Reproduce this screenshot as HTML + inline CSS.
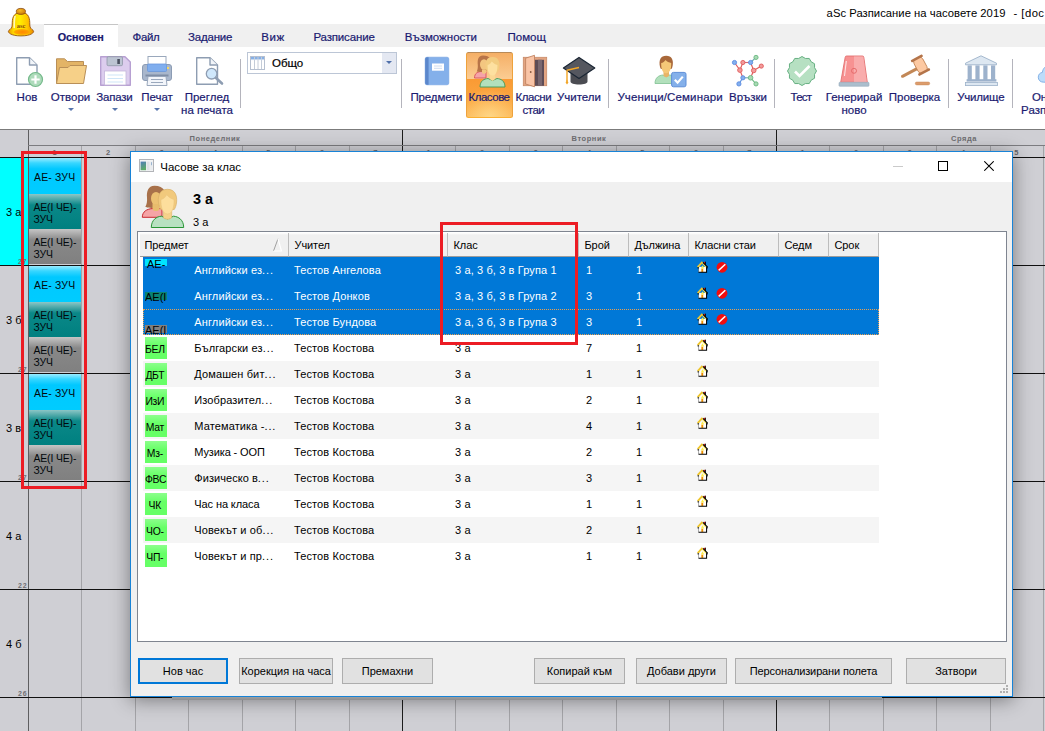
<!DOCTYPE html>
<html><head><meta charset="utf-8"><title>aSc</title><style>
*{box-sizing:border-box;margin:0;padding:0}
html,body{width:1045px;height:731px;overflow:hidden;background:#fff}
body{font-family:"Liberation Sans",sans-serif;position:relative;color:#000}
.a{position:absolute}
.t{position:absolute;white-space:pre;line-height:1}
.rl{-webkit-text-stroke:0.2px #1a1a70;position:absolute;white-space:pre;font-size:11.5px;line-height:13px;color:#1a1a70;text-align:center;transform:translateX(-50%)}
.tab{-webkit-text-stroke:0.2px #1a1a70;position:absolute;white-space:pre;font-size:11.5px;line-height:14px;color:#1a1a70;top:30px}
.sep{position:absolute;width:1px;background:#b4b4bc;top:59px;height:49px}
.vl{position:absolute;width:1px;background:#a4a4a8;top:145px;height:586px}
.vd{position:absolute;width:1px;background:#1c1c1c;top:130px;height:601px}
.hl{position:absolute;height:1px;background:#111;left:0;width:1045px}
.cl{position:absolute;font-size:11px;line-height:12px;left:6px;white-space:pre}
.cn{position:absolute;font-size:7px;line-height:7px;left:18px;color:#707074;font-weight:bold;white-space:pre;letter-spacing:0.8px}
.card{position:absolute;left:29px;width:52px;font-size:10.4px;line-height:11.5px;color:#02080c;letter-spacing:-0.12px;white-space:pre;overflow:hidden}
.lv{position:absolute;font-size:11px;line-height:13px;white-space:pre;letter-spacing:0.12px}
.hd{position:absolute;top:233px;height:24px;border-right:1px solid #bdbdbd;border-bottom:1px solid #9c9c9c;background:linear-gradient(#fff 0,#f0f0f0 2px);font-size:11px;line-height:25px;padding-left:5.5px;white-space:pre;overflow:hidden;letter-spacing:-0.1px}
.btn{position:absolute;top:658px;height:26px;border:1px solid #adadad;background:#e1e1e1;font-size:11px;line-height:24px;text-align:center;white-space:pre}
.tag{position:absolute;left:145px;width:22px;height:22px;background:linear-gradient(#8cff8c,#66ff66 40%);font-size:10.4px;letter-spacing:-0.3px;line-height:25px;text-align:center;padding-right:2.4px;white-space:pre;overflow:hidden}
</style></head><body>
<div class="t" style="left:826.6px;top:7px;font-size:11.25px;line-height:13px;color:#000;letter-spacing:0.03px">aSc Разписание на часовете 2019</div>
<div class="t" style="left:1013.6px;top:7px;font-size:11.25px;line-height:13px;color:#000;letter-spacing:0.45px">- [doc</div>
<div class="a" style="left:0;top:24px;width:1045px;height:23px;background:#f0f0f0"></div>
<div class="a" style="left:44px;top:24px;width:74px;height:24px;background:#fff;border-top:1px solid #c6c6c6"></div>
<div class="tab" style="left:57.8px;letter-spacing:-0.1px;font-weight:bold;font-size:10.8px;">Основен</div>
<div class="tab" style="left:132.6px;letter-spacing:-0.4px;">Файл</div>
<div class="tab" style="left:188px;letter-spacing:-0.2px;">Задание</div>
<div class="tab" style="left:261.3px;letter-spacing:0.6px;">Виж</div>
<div class="tab" style="left:313.4px;letter-spacing:-0.15px;">Разписание</div>
<div class="tab" style="left:404.8px;letter-spacing:0px;">Възможности</div>
<div class="tab" style="left:507.5px;letter-spacing:0px;">Помощ</div>
<svg class="a" style="left:7px;top:6px" width="29" height="32" viewBox="0 0 29 32">
<defs>
<linearGradient id="bg1" x1="0" y1="0" x2="1" y2="0"><stop offset="0" stop-color="#e89800"/><stop offset="0.2" stop-color="#ffd800"/><stop offset="0.45" stop-color="#ffee00"/><stop offset="0.75" stop-color="#ffc400"/><stop offset="1" stop-color="#e88a00"/></linearGradient>
<radialGradient id="bg2" cx="0.55" cy="0.5" r="0.6"><stop offset="0" stop-color="#ff8800"/><stop offset="0.7" stop-color="#ffa400"/><stop offset="1" stop-color="#ffc800"/></radialGradient>
<radialGradient id="bg3" cx="0.4" cy="0.35" r="0.7"><stop offset="0" stop-color="#f8b820"/><stop offset="1" stop-color="#c87808"/></radialGradient>
</defs>
<path d="M14 6.6C22.5 6.6 22.8 13 22.8 19C22.8 22 24.5 23 26.3 24.6C27.6 26 25 29.9 14 29.9C3 29.9 0.4 26 1.7 24.6C3.5 23 5.2 22 5.2 19C5.2 13 5.5 6.6 14 6.6Z" fill="url(#bg1)" stroke="#9a5410" stroke-width="0.9"/>
<ellipse cx="14.6" cy="26" rx="8.2" ry="2.9" fill="url(#bg2)"/>
<path d="M8 10.5C7.2 13 7.2 18 7.2 21.5" stroke="#fffbe0" stroke-width="1.6" fill="none" opacity="0.85" stroke-linecap="round"/>
<ellipse cx="13.9" cy="5.4" rx="4.6" ry="3" fill="url(#bg3)" stroke="#8a4a10" stroke-width="0.8"/>
<text x="14" y="22" font-family="Liberation Serif" font-size="6.5" font-weight="bold" fill="#8a4a12" text-anchor="middle">asc</text>
</svg>
<div class="a" style="left:0;top:129px;width:1045px;height:2px;background:linear-gradient(#6c6c6c,#a8a8a8)"></div>
<div class="sep" style="left:240px"></div>
<div class="sep" style="left:401px"></div>
<div class="sep" style="left:608px"></div>
<div class="sep" style="left:774px"></div>
<div class="sep" style="left:948px"></div>
<div class="sep" style="left:1012px"></div>
<div class="a" style="left:466px;top:52px;width:47px;height:66px;border:1px solid #eea23c;border-top-color:#b88a58;border-bottom-color:#fbb030;border-radius:2.5px;background:radial-gradient(ellipse 70% 45% at 50% 100%,rgba(255,225,150,0.75),rgba(255,225,150,0) 100%),linear-gradient(#f5af66 0%,#fbcc92 40%,#fa9a34 40.5%,#fba640 75%,#fcb654 100%)"></div>
<div class="rl" style="left:27px;top:91px">Нов</div>
<div class="rl" style="left:70.5px;top:91px">Отвори</div>
<div class="a" style="left:67.5px;top:107.5px;width:0;height:0;border-left:3px solid transparent;border-right:3px solid transparent;border-top:3.5px solid #5674ac"></div>
<div class="rl" style="left:114.5px;top:91px"><span style="letter-spacing:-0.25px;margin-right:0.25px">Запази</span></div>
<div class="a" style="left:111.5px;top:107.5px;width:0;height:0;border-left:3px solid transparent;border-right:3px solid transparent;border-top:3.5px solid #5674ac"></div>
<div class="rl" style="left:157px;top:91px">Печат</div>
<div class="a" style="left:154px;top:107.5px;width:0;height:0;border-left:3px solid transparent;border-right:3px solid transparent;border-top:3.5px solid #5674ac"></div>
<div class="rl" style="left:207px;top:91px">Преглед
на печата</div>
<div class="rl" style="left:436.5px;top:91px"><span style="letter-spacing:-0.15px;margin-right:0.15px">Предмети</span></div>
<div class="rl" style="left:489.3px;top:91px"><span style="letter-spacing:-0.5px;margin-right:0.5px">Класове</span></div>
<div class="rl" style="left:533.6px;top:91px"><span style="letter-spacing:-0.45px;margin-right:0.45px">Класни</span>
<span style="letter-spacing:-0.45px;margin-right:0.45px">стаи</span></div>
<div class="rl" style="left:579px;top:91px">Учители</div>
<div class="rl" style="left:670px;top:91px"><span style="letter-spacing:0.13px;margin-right:-0.13px">Ученици/Семинари</span></div>
<div class="rl" style="left:748px;top:91px">Връзки</div>
<div class="rl" style="left:801.3px;top:91px"><span style="letter-spacing:-0.8px;margin-right:0.8px">Тест</span></div>
<div class="rl" style="left:854px;top:91px">Генерирай
ново</div>
<div class="rl" style="left:914.5px;top:91px">Проверка</div>
<div class="rl" style="left:980.9px;top:91px"><span style="letter-spacing:-0.2px;margin-right:0.2px">Училище</span></div>
<div class="rl" style="left:1052.5px;top:91px">Онлайн
Разписание</div>
<div class="a" style="left:247px;top:52px;width:150px;height:22px;border:1px solid #bcc6d6;background:#fff"></div>
<div class="a" style="left:382px;top:53px;width:14px;height:20px;background:#e4e8f2"></div>
<div class="a" style="left:386px;top:61px;width:0;height:0;border-left:3px solid transparent;border-right:3px solid transparent;border-top:3.5px solid #5070aa"></div>
<div class="t" style="left:272px;top:57px;font-size:11.5px;line-height:13px;color:#000;-webkit-text-stroke:0.2px #000">Общо</div>
<svg class="a" style="left:250px;top:56px" width="15" height="14" viewBox="0 0 15 14"><rect x="0.5" y="0.5" width="14" height="13" fill="#fff" stroke="#b6c0d0"/><rect x="1" y="1" width="13" height="2.4" fill="#86b0e6"/><path d="M4.5 1V13M8 1V13M11.5 1V13" stroke="#c4ccd8" stroke-width="1" fill="none"/><path d="M1 3.6H14" stroke="#c4d4ea" stroke-width="0.8"/></svg>
<!-- New -->
<svg class="a" style="left:14px;top:55px" width="32" height="34" viewBox="0 0 32 34">
<path d="M2.7 2.7H15.5L23 10V29.3H2.7Z" fill="#fff" stroke="#8e9db2" stroke-width="1.4" stroke-linejoin="round"/>
<path d="M15.5 2.7V10H23" fill="#f2f5f9" stroke="#8e9db2" stroke-width="1.4" stroke-linejoin="round"/>
<circle cx="21.5" cy="24.5" r="7" fill="#aedbbb" stroke="#74b98a" stroke-width="1.2"/>
<path d="M21.5 20.3V28.7M17.3 24.5H25.7" stroke="#fff" stroke-width="2.2"/>
</svg>
<!-- Open -->
<svg class="a" style="left:54px;top:55px" width="36" height="34" viewBox="0 0 36 34">
<path d="M2.5 28.5V3.8H10.5L13.5 6.5H29.5V10.5" fill="#e3b466" stroke="#b98f57" stroke-width="1" stroke-linejoin="round"/>
<path d="M2.5 28.5L5.5 12.5L14 12.5L16 10.5H32.5L29.5 28.5Z" fill="#f6d088" stroke="#b98f57" stroke-width="1" stroke-linejoin="round"/>
</svg>
<!-- Save -->
<svg class="a" style="left:98px;top:54px" width="36" height="34" viewBox="0 0 36 34">
<path d="M2.7 2.7H27L32.3 8V31.3H2.7Z" fill="#dccdee" stroke="#b7a0d2" stroke-width="1.4" stroke-linejoin="round"/>
<rect x="9" y="2.7" width="15.5" height="9" rx="1.3" fill="#bcc4d2" stroke="#8f97a8" stroke-width="0.8"/>
<rect x="19.3" y="5" width="2.6" height="5" fill="#4a5060"/>
<rect x="6.5" y="17" width="21.5" height="14" fill="#fff" stroke="#c4b6da" stroke-width="0.8"/>
<path d="M9.5 21H25M9.5 24.5H25M9.5 28H25" stroke="#cfe6f8" stroke-width="1.2"/>
</svg>
<!-- Print -->
<svg class="a" style="left:140px;top:54px" width="34" height="34" viewBox="0 0 34 34">
<rect x="8" y="2.5" width="18" height="10" fill="#fff" stroke="#9aa8bc" stroke-width="1"/>
<rect x="2.5" y="10.5" width="29" height="16" rx="2.5" fill="#a9b7cc" stroke="#8c9cb4" stroke-width="1"/>
<rect x="7.5" y="10" width="19" height="7.5" rx="1" fill="#80aeee" stroke="#6a98dc" stroke-width="0.8"/>
<rect x="27" y="13" width="2" height="2" fill="#f4d868"/>
<path d="M5.5 21.5H28.5" stroke="#7f8ea6" stroke-width="2"/>
<path d="M8 22.5H26L27 31.5H7Z" fill="#f2f5fa" stroke="#9aa8bc" stroke-width="1"/>
<path d="M11 25.5H23M11 28.5H23" stroke="#9aa8bc" stroke-width="1.1"/>
</svg>
<!-- Preview -->
<svg class="a" style="left:194px;top:55px" width="32" height="34" viewBox="0 0 32 34">
<path d="M2.7 2.7H16L23.5 10V29.3H2.7Z" fill="#fff" stroke="#8e9db2" stroke-width="1.4" stroke-linejoin="round"/>
<path d="M16 2.7V10H23.5" fill="#f2f5f9" stroke="#8e9db2" stroke-width="1.4" stroke-linejoin="round"/>
<path d="M21.5 22.5L28 28.5" stroke="#8e9db2" stroke-width="2.6" stroke-linecap="round"/>
<circle cx="17.6" cy="18.7" r="5.3" fill="#cfe7fb" stroke="#8e9db2" stroke-width="1.3"/>
</svg>
<!-- Subjects (book) -->
<svg class="a" style="left:423px;top:55px" width="28" height="32" viewBox="0 0 28 32">
<rect x="2.2" y="2.2" width="23.6" height="27.6" rx="1.8" fill="#84b0ea" stroke="#6f9ee0" stroke-width="0.6"/>
<path d="M2.2 4A1.8 1.8 0 0 1 4 2.2H5.6V29.8H4A1.8 1.8 0 0 1 2.2 28Z" fill="#5b87cb"/>
<rect x="9" y="8.5" width="12" height="7.2" fill="#fff"/>
<path d="M11 11H19M11 13.3H19" stroke="#c8d8ee" stroke-width="0.9"/>
</svg>
<!-- Classes (two people) -->
<svg class="a" style="left:472px;top:53px" width="36" height="36" viewBox="0 0 36 36">
<path d="M2.5 25C2.5 20 6 18.5 10 18.5H14V25Z" fill="#f5a3a8" stroke="#d9505c" stroke-width="0.9"/>
<path d="M11 2.5C5.5 2.5 5.5 8 5.8 12C6 15 5.5 17 4.8 18.5C7 19.3 12 19 15 17.5L19 6C17 3.5 14.5 2.5 11 2.5Z" fill="#b87448"/>
<ellipse cx="12" cy="11.5" rx="4" ry="5.2" fill="#f3c680"/>
<path d="M10 16.5H14V20L12 21L10 20Z" fill="#f3c680"/>
<path d="M8 34C8 28 12 25.8 16 25.5L20.5 27.5L25 25.5C29 25.8 33 28 33 34Z" fill="#b2e0bc" stroke="#3f9a58" stroke-width="0.9"/>
<path d="M17.8 21H23.2V26L20.5 28L17.8 26Z" fill="#fbd894"/>
<path d="M20.5 4C14.5 4 13 9 13.6 14C13.9 16.5 14.8 18.5 15.5 19.5L25.5 19.5C26.2 18.5 27.1 16.5 27.4 14C28 9 26.5 4 20.5 4Z" fill="#f3cc80"/>
<path d="M15.6 12C17.5 11.5 19 10 19.8 8.5C21 10 23.5 11.5 25.4 12C25.6 17 24.5 22.5 20.5 22.5C16.5 22.5 15.4 17 15.6 12Z" fill="#fde0a0"/>
</svg>
<!-- Classrooms (door) -->
<svg class="a" style="left:521px;top:53px" width="28" height="36" viewBox="0 0 28 36">
<rect x="2.3" y="4.3" width="23.4" height="28.4" fill="#e3a582" stroke="#c98a68" stroke-width="0.8"/>
<rect x="10" y="6.8" width="13" height="26" fill="#5e4c56"/>
<rect x="17" y="6.8" width="4" height="26" fill="#7a676f"/>
<path d="M4.6 5.2L13.5 2.3V33.8L4.6 31Z" fill="#f9c4a6" stroke="#c28463" stroke-width="0.9" stroke-linejoin="round"/>
<circle cx="9.7" cy="19" r="0.9" fill="#8a5a40"/>
</svg>
<!-- Teachers (cap) -->
<svg class="a" style="left:561px;top:54px" width="36" height="34" viewBox="0 0 36 34">
<path d="M9.5 18V27.5C9.5 29.5 13 30.5 18 30.5C23 30.5 26.5 29.5 26.5 27.5V18Z" fill="#4b4c52"/>
<path d="M18 3.4L33.8 14L18 24.4L2.4 14Z" fill="#55575f" stroke="#1b2634" stroke-width="1.2" stroke-linejoin="round"/>
<path d="M18 13.5L6 16.2V27" stroke="#f2a526" stroke-width="1.4" fill="none" stroke-linejoin="round"/>
<path d="M6 25.5L4.6 28.5L6 30.5L7.4 28.5Z" fill="#f2a526"/>
</svg>
<!-- Students -->
<svg class="a" style="left:653px;top:54px" width="36" height="36" viewBox="0 0 36 36">
<path d="M2 29.5C2 23.5 6 21.3 10 21L13.2 22.5L16.4 21C20.4 21.3 24 23.5 24 29.5Z" fill="#b2e0bc" stroke="#7fc092" stroke-width="0.8"/>
<path d="M10.5 17H16V22L13.2 23.6L10.5 22Z" fill="#e8b468"/>
<path d="M13.2 1.8C7.5 1.8 6.2 6 6.6 10.5C6.8 12.5 7.3 14 8 15L18.4 15C19.1 14 19.6 12.5 19.8 10.5C20.2 6 18.9 1.8 13.2 1.8Z" fill="#a9683a"/>
<path d="M8.2 9C10 8.7 11.6 7.6 12.5 6C13.6 7.4 16.2 8.7 18.2 9C18.4 14 17.3 19.2 13.2 19.2C9.1 19.2 8 14 8.2 9Z" fill="#f5c878"/>
<rect x="18.6" y="18.4" width="14.4" height="14.4" rx="1.8" fill="#84b0ea" stroke="#5f8fd8" stroke-width="1"/>
<path d="M21.8 25.8L24.6 28.6L29.8 22.6" stroke="#fff" stroke-width="2.2" fill="none"/>
</svg>
<!-- Relations (molecule) -->
<svg class="a" style="left:730px;top:53px" width="36" height="36" viewBox="0 0 36 36">
<g stroke-width="1.1" fill="none">
<path d="M4.5 9.5L9.9 17.1L12.9 9.5" stroke="#e05a5a"/>
<path d="M12.9 9.5H20.6" stroke="#d06a7a"/>
<path d="M20.6 9.5L26 4.4" stroke="#6aa8b0"/>
<path d="M20.6 9.5L23.7 17.5" stroke="#e05a5a"/>
<path d="M31.3 13.1L23.7 17.5" stroke="#e05a5a"/>
<path d="M23.7 17.5L20.6 24.8" stroke="#e05a5a"/>
<path d="M9.9 17.1L12.9 24.8" stroke="#e05a5a"/>
<path d="M12.9 24.8H20.6" stroke="#6aa8b0"/>
<path d="M12.9 24.8L8.9 30.9" stroke="#5a90e0"/>
<path d="M20.6 24.8L26 30.9" stroke="#6ab880"/>
</g>
<g stroke-width="0.9">
<circle cx="4.5" cy="9.5" r="2.1" fill="#84b0ee" stroke="#5a8ae0"/>
<circle cx="12.9" cy="9.5" r="2.1" fill="#f29a9a" stroke="#e05a5a"/>
<circle cx="20.6" cy="9.5" r="2.1" fill="#84b0ee" stroke="#5a8ae0"/>
<circle cx="26" cy="4.4" r="2.1" fill="#a8dab4" stroke="#6ab880"/>
<circle cx="31.3" cy="13.1" r="2.1" fill="#f29a9a" stroke="#e05a5a"/>
<circle cx="9.9" cy="17.1" r="2.3" fill="#f29a9a" stroke="#e05a5a"/>
<circle cx="23.7" cy="17.5" r="2.3" fill="#f29a9a" stroke="#e05a5a"/>
<circle cx="12.9" cy="24.8" r="2.1" fill="#84b0ee" stroke="#5a8ae0"/>
<circle cx="20.6" cy="24.8" r="2.3" fill="#a8dab4" stroke="#6ab880"/>
<circle cx="8.9" cy="30.9" r="2.1" fill="#84b0ee" stroke="#5a8ae0"/>
<circle cx="26" cy="30.9" r="2.1" fill="#a8dab4" stroke="#6ab880"/>
</g>
</svg>
<!-- Test badge -->
<svg class="a" style="left:785px;top:54px" width="34" height="34" viewBox="-17 -17 34 34">
<polygon points="0.00,-14.50 3.36,-12.56 7.25,-12.56 9.19,-9.19 12.56,-7.25 12.56,-3.36 14.50,0.00 12.56,3.36 12.56,7.25 9.19,9.19 7.25,12.56 3.36,12.56 0.00,14.50 -3.36,12.56 -7.25,12.56 -9.19,9.19 -12.56,7.25 -12.56,3.36 -14.50,0.00 -12.56,-3.36 -12.56,-7.25 -9.19,-9.19 -7.25,-12.56 -3.36,-12.56" fill="#b6e0c2" stroke="#66b082" stroke-width="1" stroke-linejoin="round"/>
<path d="M-7 0.5L-2.5 5L7.5 -5" stroke="#fff" stroke-width="2.6" fill="none"/>
</svg>
<!-- Generate (siren) -->
<svg class="a" style="left:837px;top:53px" width="34" height="36" viewBox="0 0 34 36">
<path d="M9.5 3H25.5Q26.6 3 26.8 4.2L30.3 29.3H3.7L8.2 4.2Q8.4 3 9.5 3Z" fill="#f79292" stroke="#e27070" stroke-width="0.9"/>
<path d="M17 3.4H25.3Q26.2 3.4 26.4 4.4L29.8 28.9H17Z" fill="#f9adad"/>
<path d="M9.3 8L7.5 23" stroke="#fde4e4" stroke-width="1.1"/>
<circle cx="17" cy="17.8" r="2.5" fill="none" stroke="#e26868" stroke-width="0.9"/>
<rect x="2" y="29.3" width="30" height="4" rx="0.8" fill="#abbecd" stroke="#98acbd" stroke-width="0.6"/>
</svg>
<!-- Check (gavel) -->
<svg class="a" style="left:897px;top:53px" width="38" height="36" viewBox="0 0 38 36">
<path d="M5.5 23.3L21 15.2" stroke="#c28756" stroke-width="3" stroke-linecap="round"/>
<g transform="rotate(-28 23.5 12.2)">
<rect x="18.5" y="4.5" width="10" height="15.4" rx="3.4" fill="#fdc9a2" stroke="#c08050" stroke-width="0.8"/>
<rect x="17" y="3.2" width="13" height="2.6" rx="0.8" fill="#b4744a"/>
<rect x="17" y="18.6" width="13" height="2.6" rx="0.8" fill="#b4744a"/>
</g>
<rect x="18.3" y="29" width="14.4" height="2.9" rx="1.4" fill="#dc9c6c" stroke="#c88858" stroke-width="0.5"/>
</svg>
<!-- School -->
<svg class="a" style="left:963px;top:53px" width="36" height="36" viewBox="0 0 36 36">
<path d="M18 2.8L33.5 10.2V11.8H2.5V10.2Z" fill="#dde7f1" stroke="#9db2ca" stroke-width="0.9" stroke-linejoin="round"/>
<g fill="#9db2cc">
<rect x="4.6" y="12.4" width="4.2" height="15.6"/><rect x="12.4" y="12.4" width="4.2" height="15.6"/><rect x="20.3" y="12.4" width="4.2" height="15.6"/><rect x="28" y="12.4" width="4.2" height="15.6"/>
<rect x="3.6" y="26.2" width="29.8" height="2.4"/>
</g>
<rect x="2.5" y="29.4" width="32" height="3.2" fill="#dde7f1" stroke="#9db2ca" stroke-width="0.8"/>
</svg>
<!-- Cloud -->
<svg class="a" style="left:1035.5px;top:63.5px" width="30" height="20" viewBox="0 0 30 22">
<path d="M7 20C3 20 1 17.5 1 14.5C1 11.5 3 9.5 5.5 9.3C6 4.5 9.5 1.5 14 1.5C19 1.5 22 5 22.5 9C26 9 28.5 11.5 28.5 14.5C28.5 17.5 26.5 20 23 20Z" fill="#bcdcfa" stroke="#7cacE4" stroke-width="1"/>
</svg>

<div class="a" style="left:0;top:130px;width:1045px;height:601px;background:#cfcfd4"></div>
<div class="a" style="left:0;top:158px;width:28px;height:107px;background:#00ffff"></div>
<div class="vl" style="left:81.4px"></div>
<div class="vl" style="left:134.9px"></div>
<div class="vl" style="left:188.3px"></div>
<div class="vl" style="left:241.7px"></div>
<div class="vl" style="left:295.1px"></div>
<div class="vl" style="left:348.6px"></div>
<div class="vl" style="left:455.4px"></div>
<div class="vl" style="left:508.9px"></div>
<div class="vl" style="left:562.3px"></div>
<div class="vl" style="left:615.7px"></div>
<div class="vl" style="left:669.1px"></div>
<div class="vl" style="left:722.6px"></div>
<div class="vl" style="left:829.4px"></div>
<div class="vl" style="left:882.9px"></div>
<div class="vl" style="left:936.3px"></div>
<div class="vl" style="left:989.7px"></div>
<div class="vl" style="left:1043.1px"></div>
<div class="vd" style="left:28px;background:#5e5e60"></div>
<div class="vd" style="left:402px;"></div>
<div class="vd" style="left:776px;"></div>
<div class="a" style="left:28px;top:145px;width:1017px;height:1px;background:#7c7c80"></div>
<div class="hl" style="top:157px"></div>
<div class="hl" style="top:265px"></div>
<div class="hl" style="top:373px"></div>
<div class="hl" style="top:481px"></div>
<div class="hl" style="top:589px"></div>
<div class="hl" style="top:697px"></div>
<div class="t" style="left:215px;top:135px;font-size:7.5px;font-weight:bold;color:#6e6e72;transform:translateX(-50%);line-height:8px;letter-spacing:0.55px">Понеделник</div>
<div class="t" style="left:589px;top:135px;font-size:7.5px;font-weight:bold;color:#6e6e72;transform:translateX(-50%);line-height:8px;letter-spacing:0.55px">Вторник</div>
<div class="t" style="left:964px;top:135px;font-size:7.5px;font-weight:bold;color:#6e6e72;transform:translateX(-50%);line-height:8px;letter-spacing:0.55px">Сряда</div>
<div class="t" style="left:54.7px;top:149px;font-size:7.5px;font-weight:bold;color:#66666a;transform:translateX(-50%);line-height:8px">1</div>
<div class="t" style="left:108.1px;top:149px;font-size:7.5px;font-weight:bold;color:#66666a;transform:translateX(-50%);line-height:8px">2</div>
<div class="t" style="left:161.6px;top:149px;font-size:7.5px;font-weight:bold;color:#66666a;transform:translateX(-50%);line-height:8px">3</div>
<div class="t" style="left:215.0px;top:149px;font-size:7.5px;font-weight:bold;color:#66666a;transform:translateX(-50%);line-height:8px">4</div>
<div class="t" style="left:268.4px;top:149px;font-size:7.5px;font-weight:bold;color:#66666a;transform:translateX(-50%);line-height:8px">5</div>
<div class="t" style="left:321.9px;top:149px;font-size:7.5px;font-weight:bold;color:#66666a;transform:translateX(-50%);line-height:8px">6</div>
<div class="t" style="left:375.3px;top:149px;font-size:7.5px;font-weight:bold;color:#66666a;transform:translateX(-50%);line-height:8px">7</div>
<div class="t" style="left:428.7px;top:149px;font-size:7.5px;font-weight:bold;color:#66666a;transform:translateX(-50%);line-height:8px">1</div>
<div class="t" style="left:482.1px;top:149px;font-size:7.5px;font-weight:bold;color:#66666a;transform:translateX(-50%);line-height:8px">2</div>
<div class="t" style="left:535.6px;top:149px;font-size:7.5px;font-weight:bold;color:#66666a;transform:translateX(-50%);line-height:8px">3</div>
<div class="t" style="left:589.0px;top:149px;font-size:7.5px;font-weight:bold;color:#66666a;transform:translateX(-50%);line-height:8px">4</div>
<div class="t" style="left:642.4px;top:149px;font-size:7.5px;font-weight:bold;color:#66666a;transform:translateX(-50%);line-height:8px">5</div>
<div class="t" style="left:695.9px;top:149px;font-size:7.5px;font-weight:bold;color:#66666a;transform:translateX(-50%);line-height:8px">6</div>
<div class="t" style="left:749.3px;top:149px;font-size:7.5px;font-weight:bold;color:#66666a;transform:translateX(-50%);line-height:8px">7</div>
<div class="t" style="left:802.7px;top:149px;font-size:7.5px;font-weight:bold;color:#66666a;transform:translateX(-50%);line-height:8px">1</div>
<div class="t" style="left:856.1px;top:149px;font-size:7.5px;font-weight:bold;color:#66666a;transform:translateX(-50%);line-height:8px">2</div>
<div class="t" style="left:909.6px;top:149px;font-size:7.5px;font-weight:bold;color:#66666a;transform:translateX(-50%);line-height:8px">3</div>
<div class="t" style="left:963.0px;top:149px;font-size:7.5px;font-weight:bold;color:#66666a;transform:translateX(-50%);line-height:8px">4</div>
<div class="t" style="left:1016.4px;top:149px;font-size:7.5px;font-weight:bold;color:#66666a;transform:translateX(-50%);line-height:8px">5</div>
<div class="cl" style="top:206px">3 а</div>
<div class="cn" style="top:258px">27</div>
<div class="cl" style="top:314px">3 б</div>
<div class="cn" style="top:366px">27</div>
<div class="cl" style="top:422px">3 в</div>
<div class="cn" style="top:474px">27</div>
<div class="cl" style="top:530px">4 а</div>
<div class="cn" style="top:582px">22</div>
<div class="cl" style="top:638px">4 б</div>
<div class="cn" style="top:690px">26</div>
<div class="card" style="top:158px;height:36px;background:linear-gradient(#9aecff 0,#38d6ff 5px,#00c8ff 11px,#00ccff 100%);padding:14px 0 0 5px;letter-spacing:0.2px">АЕ- ЗУЧ</div>
<div class="card" style="top:194px;height:35px;background:linear-gradient(#8cc6c6 0,#0a8888 11px,#008080 100%);padding:8px 0 0 4.5px">АЕ(I ЧЕ)-
ЗУЧ</div>
<div class="card" style="top:229px;height:35px;background:linear-gradient(#c6c6c6 0,#888 11px,#808080 100%);padding:8px 0 0 4.5px">АЕ(I ЧЕ)-
ЗУЧ</div>
<div class="card" style="top:266px;height:36px;background:linear-gradient(#9aecff 0,#38d6ff 5px,#00c8ff 11px,#00ccff 100%);padding:14px 0 0 5px;letter-spacing:0.2px">АЕ- ЗУЧ</div>
<div class="card" style="top:302px;height:35px;background:linear-gradient(#8cc6c6 0,#0a8888 11px,#008080 100%);padding:8px 0 0 4.5px">АЕ(I ЧЕ)-
ЗУЧ</div>
<div class="card" style="top:337px;height:35px;background:linear-gradient(#c6c6c6 0,#888 11px,#808080 100%);padding:8px 0 0 4.5px">АЕ(I ЧЕ)-
ЗУЧ</div>
<div class="card" style="top:374px;height:36px;background:linear-gradient(#9aecff 0,#38d6ff 5px,#00c8ff 11px,#00ccff 100%);padding:14px 0 0 5px;letter-spacing:0.2px">АЕ- ЗУЧ</div>
<div class="card" style="top:410px;height:35px;background:linear-gradient(#8cc6c6 0,#0a8888 11px,#008080 100%);padding:8px 0 0 4.5px">АЕ(I ЧЕ)-
ЗУЧ</div>
<div class="card" style="top:445px;height:35px;background:linear-gradient(#c6c6c6 0,#888 11px,#808080 100%);padding:8px 0 0 4.5px">АЕ(I ЧЕ)-
ЗУЧ</div>
<div class="a" style="left:21px;top:151px;width:66px;height:338px;border:3px solid #ec1c24"></div>
<div class="a" style="left:172px;top:697px;width:710px;height:3px;background:linear-gradient(#d6d6d6,#b4b4b6)"></div>
<div class="a" style="left:130px;top:151px;width:883px;height:546px;background:#f0f0f0;border:1px solid #1883d7;box-shadow:0 3px 18px rgba(0,0,0,0.42)"></div>
<div class="a" style="left:131px;top:152px;width:881px;height:30px;background:#fff"></div>
<div class="t" style="left:160.3px;top:160px;font-size:11.5px;line-height:14px">Часове за клас</div>
<svg class="a" style="left:139px;top:159px" width="15" height="13" viewBox="0 0 15 13"><defs><linearGradient id="wg" x1="0" y1="0" x2="0.3" y2="1"><stop offset="0" stop-color="#4f7dba"/><stop offset="1" stop-color="#5cab68"/></linearGradient></defs><rect x="0.5" y="0.5" width="14" height="12" fill="#f2f3f4" stroke="#b2b4b8"/><rect x="1.6" y="2.6" width="5.4" height="8.6" fill="url(#wg)"/><rect x="7.6" y="2.6" width="3" height="8.6" fill="#dde1e5"/><rect x="11.2" y="2.6" width="2.4" height="8.6" fill="#e8ebee"/><rect x="12" y="3.2" width="1" height="3" fill="#9ab4d0"/></svg>
<div class="a" style="left:893px;top:166px;width:10px;height:1px;background:#cacaca"></div>
<div class="a" style="left:938px;top:161px;width:10px;height:10px;border:1px solid #000"></div>
<svg class="a" style="left:984px;top:161px" width="10" height="10" viewBox="0 0 10 10"><path d="M0.3 0.3L9.7 9.7M9.7 0.3L0.3 9.7" stroke="#000" stroke-width="1.05"/></svg>
<div class="t" style="left:193px;top:191px;font-size:14.5px;font-weight:bold;line-height:16px">3 а</div>
<div class="t" style="left:193px;top:216px;font-size:11px;line-height:13px">3 а</div>
<svg class="a" style="left:140px;top:184px" width="46" height="46" viewBox="0 0 46 46">
<!-- woman back -->
<path d="M2.3 33.3C2.3 27.5 7 25 12 24.6H22V33.3Z" fill="#f5a4a6" stroke="#c8282e" stroke-width="1"/>
<path d="M14.5 1.8C8 1.8 6.5 8 7 13.5C7.3 17.5 6.8 20.5 5.3 22.8C9 24.5 16 24.5 20 22L24.5 6.5C22.5 3.5 19.5 1.8 14.5 1.8Z" fill="#a8714a"/>
<ellipse cx="16" cy="14.5" rx="5" ry="6.6" fill="#ecc172"/>
<path d="M12.5 20H19.5V25.5C17.5 27.5 14.5 27.5 12.5 25.5Z" fill="#e8bc6c"/>
<!-- front -->
<path d="M11.3 43.5C11.3 36 16.5 32.5 21.5 32.2L27.5 34.8L33.5 32.2C38.5 32.5 43.7 36 43.7 43.5Z" fill="#b8e1c1" stroke="#2a9636" stroke-width="1"/>
<path d="M23.3 27.5H31.7V33.6C30 35.8 25 35.8 23.3 33.6Z" fill="#f6d28a" stroke="#dcb064" stroke-width="0.6"/>
<path d="M27.5 5.3C20 5.3 17.8 11.5 18.4 18C18.7 21.5 19.8 24 20.8 25.5L34.2 25.5C35.2 24 36.3 21.5 36.6 18C37.2 11.5 35 5.3 27.5 5.3Z" fill="#f1c97c" stroke="#d9b068" stroke-width="0.7"/>
<path d="M21 15.5C23.6 15 25.6 13 26.6 10.8C28.2 12.8 31.6 15 34 15.5C34.3 22 32.8 30 27.5 30C22.2 30 20.7 22 21 15.5Z" fill="#fdde9c" stroke="#e6c07a" stroke-width="0.5"/>
</svg>

<div class="a" style="left:137px;top:231px;width:870px;height:411px;background:#fff;border:1px solid #7f8590"></div>
<div class="hd" style="left:140px;width:149px;padding-left:4.5px">Предмет</div>
<div class="hd" style="left:289px;width:159px;">Учител</div>
<div class="hd" style="left:448px;width:131px;">Клас</div>
<div class="hd" style="left:579px;width:50px;">Брой</div>
<div class="hd" style="left:629px;width:60px;">Дължина</div>
<div class="hd" style="left:689px;width:90px;">Класни стаи</div>
<div class="hd" style="left:779px;width:50px;">Седм</div>
<div class="hd" style="left:829px;width:50px;">Срок</div>
<svg class="a" style="left:272px;top:238px" width="11" height="14" viewBox="0 0 11 14"><path d="M1.5 13L6 0.8" stroke="#a0a0a0" fill="none"/><path d="M6 0.8L9.5 13H1.5" stroke="#fff" stroke-width="1.2" fill="none"/></svg>
<div class="a" style="left:143px;top:257px;width:736px;height:26px;background:#0078d7"></div>
<div class="lv" style="left:194.3px;top:264px;color:#fff;letter-spacing:0.12px">Английски ез<span style="letter-spacing:0.9px">...</span></div>
<div class="lv" style="left:294px;top:264px;color:#fff">Тестов Ангелова</div>
<div class="lv" style="left:455px;top:264px;color:#fff">3 а, 3 б, 3 в Група 1</div>
<div class="lv" style="left:586px;top:264px;color:#fff">1</div>
<div class="lv" style="left:636px;top:264px;color:#fff">1</div>
<svg class="a" style="left:697px;top:261.2px" width="11.3" height="12.2" viewBox="0 0 12 13"><rect x="7.4" y="0.9" width="1.2" height="2.6" fill="#e81818"/><rect x="8.4" y="0.7" width="1" height="3.6" fill="#000"/><path d="M1.8 6.2H10V11.8H1.8Z" fill="#fff"/><path d="M4 8L5.8 4.4L7.8 8Z" fill="#fff04a"/><rect x="4.6" y="8.3" width="2" height="3.4" fill="#f09000"/><path d="M1.6 12.1H10.2V6.6" stroke="#000" stroke-width="1.1" fill="none"/><path d="M1.6 7V12" stroke="#555" stroke-width="0.5" fill="none"/><path d="M5.9 1.2L11.2 6.7" stroke="#000" stroke-width="1.5" fill="none"/><path d="M5.6 2.4L9.6 6.6" stroke="#ffe44a" stroke-width="1.1" fill="none"/><path d="M0.7 6.6L5.8 1" stroke="#efc52a" stroke-width="2" fill="none"/><path d="M0.5 7.3H2.2M9.8 7.3H11.6" stroke="#000" stroke-width="1" fill="none"/></svg>
<svg class="a" style="left:715.6px;top:261px" width="12" height="12" viewBox="0 0 12 12"><circle cx="6" cy="6.3" r="5.4" fill="#f20d0d"/><path d="M2.7 9.4L9.3 3.2" stroke="#fff" stroke-width="1.5"/></svg>
<div class="a" style="left:143px;top:283px;width:736px;height:26px;background:#0078d7"></div>
<div class="lv" style="left:194.3px;top:290px;color:#fff;letter-spacing:0.12px">Английски ез<span style="letter-spacing:0.9px">...</span></div>
<div class="lv" style="left:294px;top:290px;color:#fff">Тестов Донков</div>
<div class="lv" style="left:455px;top:290px;color:#fff">3 а, 3 б, 3 в Група 2</div>
<div class="lv" style="left:586px;top:290px;color:#fff">3</div>
<div class="lv" style="left:636px;top:290px;color:#fff">1</div>
<svg class="a" style="left:697px;top:287.2px" width="11.3" height="12.2" viewBox="0 0 12 13"><rect x="7.4" y="0.9" width="1.2" height="2.6" fill="#e81818"/><rect x="8.4" y="0.7" width="1" height="3.6" fill="#000"/><path d="M1.8 6.2H10V11.8H1.8Z" fill="#fff"/><path d="M4 8L5.8 4.4L7.8 8Z" fill="#fff04a"/><rect x="4.6" y="8.3" width="2" height="3.4" fill="#f09000"/><path d="M1.6 12.1H10.2V6.6" stroke="#000" stroke-width="1.1" fill="none"/><path d="M1.6 7V12" stroke="#555" stroke-width="0.5" fill="none"/><path d="M5.9 1.2L11.2 6.7" stroke="#000" stroke-width="1.5" fill="none"/><path d="M5.6 2.4L9.6 6.6" stroke="#ffe44a" stroke-width="1.1" fill="none"/><path d="M0.7 6.6L5.8 1" stroke="#efc52a" stroke-width="2" fill="none"/><path d="M0.5 7.3H2.2M9.8 7.3H11.6" stroke="#000" stroke-width="1" fill="none"/></svg>
<svg class="a" style="left:715.6px;top:287px" width="12" height="12" viewBox="0 0 12 12"><circle cx="6" cy="6.3" r="5.4" fill="#f20d0d"/><path d="M2.7 9.4L9.3 3.2" stroke="#fff" stroke-width="1.5"/></svg>
<div class="a" style="left:143px;top:309px;width:736px;height:26px;background:#0078d7"></div>
<div class="lv" style="left:194.3px;top:316px;color:#fff;letter-spacing:0.12px">Английски ез<span style="letter-spacing:0.9px">...</span></div>
<div class="lv" style="left:294px;top:316px;color:#fff">Тестов Бундова</div>
<div class="lv" style="left:455px;top:316px;color:#fff">3 а, 3 б, 3 в Група 3</div>
<div class="lv" style="left:586px;top:316px;color:#fff">3</div>
<div class="lv" style="left:636px;top:316px;color:#fff">1</div>
<svg class="a" style="left:697px;top:313.2px" width="11.3" height="12.2" viewBox="0 0 12 13"><rect x="7.4" y="0.9" width="1.2" height="2.6" fill="#e81818"/><rect x="8.4" y="0.7" width="1" height="3.6" fill="#000"/><path d="M1.8 6.2H10V11.8H1.8Z" fill="#fff"/><path d="M4 8L5.8 4.4L7.8 8Z" fill="#fff04a"/><rect x="4.6" y="8.3" width="2" height="3.4" fill="#f09000"/><path d="M1.6 12.1H10.2V6.6" stroke="#000" stroke-width="1.1" fill="none"/><path d="M1.6 7V12" stroke="#555" stroke-width="0.5" fill="none"/><path d="M5.9 1.2L11.2 6.7" stroke="#000" stroke-width="1.5" fill="none"/><path d="M5.6 2.4L9.6 6.6" stroke="#ffe44a" stroke-width="1.1" fill="none"/><path d="M0.7 6.6L5.8 1" stroke="#efc52a" stroke-width="2" fill="none"/><path d="M0.5 7.3H2.2M9.8 7.3H11.6" stroke="#000" stroke-width="1" fill="none"/></svg>
<svg class="a" style="left:715.6px;top:313px" width="12" height="12" viewBox="0 0 12 12"><circle cx="6" cy="6.3" r="5.4" fill="#f20d0d"/><path d="M2.7 9.4L9.3 3.2" stroke="#fff" stroke-width="1.5"/></svg>
<div class="lv" style="left:194.3px;top:342px;color:#000;letter-spacing:0.12px">Български ез<span style="letter-spacing:0.9px">...</span></div>
<div class="lv" style="left:294px;top:342px;color:#000">Тестов Костова</div>
<div class="lv" style="left:455px;top:342px;color:#000">3 а</div>
<div class="lv" style="left:586px;top:342px;color:#000">7</div>
<div class="lv" style="left:636px;top:342px;color:#000">1</div>
<svg class="a" style="left:697px;top:339.2px" width="11.3" height="12.2" viewBox="0 0 12 13"><rect x="7.4" y="0.9" width="1.2" height="2.6" fill="#e81818"/><rect x="8.4" y="0.7" width="1" height="3.6" fill="#000"/><path d="M1.8 6.2H10V11.8H1.8Z" fill="#fff"/><path d="M4 8L5.8 4.4L7.8 8Z" fill="#fff04a"/><rect x="4.6" y="8.3" width="2" height="3.4" fill="#f09000"/><path d="M1.6 12.1H10.2V6.6" stroke="#000" stroke-width="1.1" fill="none"/><path d="M1.6 7V12" stroke="#555" stroke-width="0.5" fill="none"/><path d="M5.9 1.2L11.2 6.7" stroke="#000" stroke-width="1.5" fill="none"/><path d="M5.6 2.4L9.6 6.6" stroke="#ffe44a" stroke-width="1.1" fill="none"/><path d="M0.7 6.6L5.8 1" stroke="#efc52a" stroke-width="2" fill="none"/><path d="M0.5 7.3H2.2M9.8 7.3H11.6" stroke="#000" stroke-width="1" fill="none"/></svg>
<div class="tag" style="top:337px">БЕЛ</div>
<div class="a" style="left:143px;top:361px;width:736px;height:26px;background:#f5f5f5"></div>
<div class="lv" style="left:194.3px;top:368px;color:#000;letter-spacing:0.12px">Домашен бит<span style="letter-spacing:0.9px">...</span></div>
<div class="lv" style="left:294px;top:368px;color:#000">Тестов Костова</div>
<div class="lv" style="left:455px;top:368px;color:#000">3 а</div>
<div class="lv" style="left:586px;top:368px;color:#000">1</div>
<div class="lv" style="left:636px;top:368px;color:#000">1</div>
<svg class="a" style="left:697px;top:365.2px" width="11.3" height="12.2" viewBox="0 0 12 13"><rect x="7.4" y="0.9" width="1.2" height="2.6" fill="#e81818"/><rect x="8.4" y="0.7" width="1" height="3.6" fill="#000"/><path d="M1.8 6.2H10V11.8H1.8Z" fill="#fff"/><path d="M4 8L5.8 4.4L7.8 8Z" fill="#fff04a"/><rect x="4.6" y="8.3" width="2" height="3.4" fill="#f09000"/><path d="M1.6 12.1H10.2V6.6" stroke="#000" stroke-width="1.1" fill="none"/><path d="M1.6 7V12" stroke="#555" stroke-width="0.5" fill="none"/><path d="M5.9 1.2L11.2 6.7" stroke="#000" stroke-width="1.5" fill="none"/><path d="M5.6 2.4L9.6 6.6" stroke="#ffe44a" stroke-width="1.1" fill="none"/><path d="M0.7 6.6L5.8 1" stroke="#efc52a" stroke-width="2" fill="none"/><path d="M0.5 7.3H2.2M9.8 7.3H11.6" stroke="#000" stroke-width="1" fill="none"/></svg>
<div class="tag" style="top:363px">ДБТ</div>
<div class="lv" style="left:194.3px;top:394px;color:#000;letter-spacing:0.12px">Изобразител<span style="letter-spacing:0.9px">...</span></div>
<div class="lv" style="left:294px;top:394px;color:#000">Тестов Костова</div>
<div class="lv" style="left:455px;top:394px;color:#000">3 а</div>
<div class="lv" style="left:586px;top:394px;color:#000">2</div>
<div class="lv" style="left:636px;top:394px;color:#000">1</div>
<svg class="a" style="left:697px;top:391.2px" width="11.3" height="12.2" viewBox="0 0 12 13"><rect x="7.4" y="0.9" width="1.2" height="2.6" fill="#e81818"/><rect x="8.4" y="0.7" width="1" height="3.6" fill="#000"/><path d="M1.8 6.2H10V11.8H1.8Z" fill="#fff"/><path d="M4 8L5.8 4.4L7.8 8Z" fill="#fff04a"/><rect x="4.6" y="8.3" width="2" height="3.4" fill="#f09000"/><path d="M1.6 12.1H10.2V6.6" stroke="#000" stroke-width="1.1" fill="none"/><path d="M1.6 7V12" stroke="#555" stroke-width="0.5" fill="none"/><path d="M5.9 1.2L11.2 6.7" stroke="#000" stroke-width="1.5" fill="none"/><path d="M5.6 2.4L9.6 6.6" stroke="#ffe44a" stroke-width="1.1" fill="none"/><path d="M0.7 6.6L5.8 1" stroke="#efc52a" stroke-width="2" fill="none"/><path d="M0.5 7.3H2.2M9.8 7.3H11.6" stroke="#000" stroke-width="1" fill="none"/></svg>
<div class="tag" style="top:389px">ИзИ</div>
<div class="a" style="left:143px;top:413px;width:736px;height:26px;background:#f5f5f5"></div>
<div class="lv" style="left:194.3px;top:420px;color:#000;letter-spacing:0.12px">Математика -<span style="letter-spacing:0.9px">...</span></div>
<div class="lv" style="left:294px;top:420px;color:#000">Тестов Костова</div>
<div class="lv" style="left:455px;top:420px;color:#000">3 а</div>
<div class="lv" style="left:586px;top:420px;color:#000">4</div>
<div class="lv" style="left:636px;top:420px;color:#000">1</div>
<svg class="a" style="left:697px;top:417.2px" width="11.3" height="12.2" viewBox="0 0 12 13"><rect x="7.4" y="0.9" width="1.2" height="2.6" fill="#e81818"/><rect x="8.4" y="0.7" width="1" height="3.6" fill="#000"/><path d="M1.8 6.2H10V11.8H1.8Z" fill="#fff"/><path d="M4 8L5.8 4.4L7.8 8Z" fill="#fff04a"/><rect x="4.6" y="8.3" width="2" height="3.4" fill="#f09000"/><path d="M1.6 12.1H10.2V6.6" stroke="#000" stroke-width="1.1" fill="none"/><path d="M1.6 7V12" stroke="#555" stroke-width="0.5" fill="none"/><path d="M5.9 1.2L11.2 6.7" stroke="#000" stroke-width="1.5" fill="none"/><path d="M5.6 2.4L9.6 6.6" stroke="#ffe44a" stroke-width="1.1" fill="none"/><path d="M0.7 6.6L5.8 1" stroke="#efc52a" stroke-width="2" fill="none"/><path d="M0.5 7.3H2.2M9.8 7.3H11.6" stroke="#000" stroke-width="1" fill="none"/></svg>
<div class="tag" style="top:415px">Мат</div>
<div class="lv" style="left:194.3px;top:446px;color:#000;letter-spacing:-0.13px">Музика - ООП</div>
<div class="lv" style="left:294px;top:446px;color:#000">Тестов Костова</div>
<div class="lv" style="left:455px;top:446px;color:#000">3 а</div>
<div class="lv" style="left:586px;top:446px;color:#000">2</div>
<div class="lv" style="left:636px;top:446px;color:#000">1</div>
<svg class="a" style="left:697px;top:443.2px" width="11.3" height="12.2" viewBox="0 0 12 13"><rect x="7.4" y="0.9" width="1.2" height="2.6" fill="#e81818"/><rect x="8.4" y="0.7" width="1" height="3.6" fill="#000"/><path d="M1.8 6.2H10V11.8H1.8Z" fill="#fff"/><path d="M4 8L5.8 4.4L7.8 8Z" fill="#fff04a"/><rect x="4.6" y="8.3" width="2" height="3.4" fill="#f09000"/><path d="M1.6 12.1H10.2V6.6" stroke="#000" stroke-width="1.1" fill="none"/><path d="M1.6 7V12" stroke="#555" stroke-width="0.5" fill="none"/><path d="M5.9 1.2L11.2 6.7" stroke="#000" stroke-width="1.5" fill="none"/><path d="M5.6 2.4L9.6 6.6" stroke="#ffe44a" stroke-width="1.1" fill="none"/><path d="M0.7 6.6L5.8 1" stroke="#efc52a" stroke-width="2" fill="none"/><path d="M0.5 7.3H2.2M9.8 7.3H11.6" stroke="#000" stroke-width="1" fill="none"/></svg>
<div class="tag" style="top:441px">Мз-</div>
<div class="a" style="left:143px;top:465px;width:736px;height:26px;background:#f5f5f5"></div>
<div class="lv" style="left:194.3px;top:472px;color:#000;letter-spacing:0.05px">Физическо в<span style="letter-spacing:0.9px">...</span></div>
<div class="lv" style="left:294px;top:472px;color:#000">Тестов Костова</div>
<div class="lv" style="left:455px;top:472px;color:#000">3 а</div>
<div class="lv" style="left:586px;top:472px;color:#000">3</div>
<div class="lv" style="left:636px;top:472px;color:#000">1</div>
<svg class="a" style="left:697px;top:469.2px" width="11.3" height="12.2" viewBox="0 0 12 13"><rect x="7.4" y="0.9" width="1.2" height="2.6" fill="#e81818"/><rect x="8.4" y="0.7" width="1" height="3.6" fill="#000"/><path d="M1.8 6.2H10V11.8H1.8Z" fill="#fff"/><path d="M4 8L5.8 4.4L7.8 8Z" fill="#fff04a"/><rect x="4.6" y="8.3" width="2" height="3.4" fill="#f09000"/><path d="M1.6 12.1H10.2V6.6" stroke="#000" stroke-width="1.1" fill="none"/><path d="M1.6 7V12" stroke="#555" stroke-width="0.5" fill="none"/><path d="M5.9 1.2L11.2 6.7" stroke="#000" stroke-width="1.5" fill="none"/><path d="M5.6 2.4L9.6 6.6" stroke="#ffe44a" stroke-width="1.1" fill="none"/><path d="M0.7 6.6L5.8 1" stroke="#efc52a" stroke-width="2" fill="none"/><path d="M0.5 7.3H2.2M9.8 7.3H11.6" stroke="#000" stroke-width="1" fill="none"/></svg>
<div class="tag" style="top:467px">ФВС</div>
<div class="lv" style="left:194.3px;top:498px;color:#000;letter-spacing:-0.1px">Час на класа</div>
<div class="lv" style="left:294px;top:498px;color:#000">Тестов Костова</div>
<div class="lv" style="left:455px;top:498px;color:#000">3 а</div>
<div class="lv" style="left:586px;top:498px;color:#000">1</div>
<div class="lv" style="left:636px;top:498px;color:#000">1</div>
<svg class="a" style="left:697px;top:495.2px" width="11.3" height="12.2" viewBox="0 0 12 13"><rect x="7.4" y="0.9" width="1.2" height="2.6" fill="#e81818"/><rect x="8.4" y="0.7" width="1" height="3.6" fill="#000"/><path d="M1.8 6.2H10V11.8H1.8Z" fill="#fff"/><path d="M4 8L5.8 4.4L7.8 8Z" fill="#fff04a"/><rect x="4.6" y="8.3" width="2" height="3.4" fill="#f09000"/><path d="M1.6 12.1H10.2V6.6" stroke="#000" stroke-width="1.1" fill="none"/><path d="M1.6 7V12" stroke="#555" stroke-width="0.5" fill="none"/><path d="M5.9 1.2L11.2 6.7" stroke="#000" stroke-width="1.5" fill="none"/><path d="M5.6 2.4L9.6 6.6" stroke="#ffe44a" stroke-width="1.1" fill="none"/><path d="M0.7 6.6L5.8 1" stroke="#efc52a" stroke-width="2" fill="none"/><path d="M0.5 7.3H2.2M9.8 7.3H11.6" stroke="#000" stroke-width="1" fill="none"/></svg>
<div class="tag" style="top:493px">ЧК</div>
<div class="a" style="left:143px;top:517px;width:736px;height:26px;background:#f5f5f5"></div>
<div class="lv" style="left:194.3px;top:524px;color:#000;letter-spacing:0.12px">Човекът и об<span style="letter-spacing:0.9px">...</span></div>
<div class="lv" style="left:294px;top:524px;color:#000">Тестов Костова</div>
<div class="lv" style="left:455px;top:524px;color:#000">3 а</div>
<div class="lv" style="left:586px;top:524px;color:#000">2</div>
<div class="lv" style="left:636px;top:524px;color:#000">1</div>
<svg class="a" style="left:697px;top:521.2px" width="11.3" height="12.2" viewBox="0 0 12 13"><rect x="7.4" y="0.9" width="1.2" height="2.6" fill="#e81818"/><rect x="8.4" y="0.7" width="1" height="3.6" fill="#000"/><path d="M1.8 6.2H10V11.8H1.8Z" fill="#fff"/><path d="M4 8L5.8 4.4L7.8 8Z" fill="#fff04a"/><rect x="4.6" y="8.3" width="2" height="3.4" fill="#f09000"/><path d="M1.6 12.1H10.2V6.6" stroke="#000" stroke-width="1.1" fill="none"/><path d="M1.6 7V12" stroke="#555" stroke-width="0.5" fill="none"/><path d="M5.9 1.2L11.2 6.7" stroke="#000" stroke-width="1.5" fill="none"/><path d="M5.6 2.4L9.6 6.6" stroke="#ffe44a" stroke-width="1.1" fill="none"/><path d="M0.7 6.6L5.8 1" stroke="#efc52a" stroke-width="2" fill="none"/><path d="M0.5 7.3H2.2M9.8 7.3H11.6" stroke="#000" stroke-width="1" fill="none"/></svg>
<div class="tag" style="top:519px">ЧО-</div>
<div class="lv" style="left:194.3px;top:550px;color:#000;letter-spacing:0.12px">Човекът и пр<span style="letter-spacing:0.9px">...</span></div>
<div class="lv" style="left:294px;top:550px;color:#000">Тестов Костова</div>
<div class="lv" style="left:455px;top:550px;color:#000">3 а</div>
<div class="lv" style="left:586px;top:550px;color:#000">1</div>
<div class="lv" style="left:636px;top:550px;color:#000">1</div>
<svg class="a" style="left:697px;top:547.2px" width="11.3" height="12.2" viewBox="0 0 12 13"><rect x="7.4" y="0.9" width="1.2" height="2.6" fill="#e81818"/><rect x="8.4" y="0.7" width="1" height="3.6" fill="#000"/><path d="M1.8 6.2H10V11.8H1.8Z" fill="#fff"/><path d="M4 8L5.8 4.4L7.8 8Z" fill="#fff04a"/><rect x="4.6" y="8.3" width="2" height="3.4" fill="#f09000"/><path d="M1.6 12.1H10.2V6.6" stroke="#000" stroke-width="1.1" fill="none"/><path d="M1.6 7V12" stroke="#555" stroke-width="0.5" fill="none"/><path d="M5.9 1.2L11.2 6.7" stroke="#000" stroke-width="1.5" fill="none"/><path d="M5.6 2.4L9.6 6.6" stroke="#ffe44a" stroke-width="1.1" fill="none"/><path d="M0.7 6.6L5.8 1" stroke="#efc52a" stroke-width="2" fill="none"/><path d="M0.5 7.3H2.2M9.8 7.3H11.6" stroke="#000" stroke-width="1" fill="none"/></svg>
<div class="tag" style="top:545px">ЧП-</div>
<div class="a" style="left:145px;top:259px;width:22px;height:7px;background:#00e4ff"></div>
<div class="a" style="left:145px;top:292px;width:22px;height:8px;background:#0a8474"></div>
<div class="a" style="left:145px;top:325px;width:22px;height:8px;background:#808080"></div>
<div class="a" style="left:145px;top:257px;width:24px;height:78px;overflow:hidden;font-size:11px;line-height:11px;white-space:pre;color:#000"><span class="a" style="left:2px;top:1.5px">АЕ-</span><span class="a" style="left:0;top:34.5px">АЕ(I</span><span class="a" style="left:0;top:68px">АЕ(I</span></div>
<div class="a" style="left:143px;top:309px;width:736px;height:26px;border:1px dotted #eaa050"></div>
<div class="a" style="left:440px;top:222px;width:138px;height:123px;border:3px solid #ec1c24"></div>
<div class="btn" style="left:138px;width:90px;border:2px solid #0078d7;line-height:22px;">Нов час</div>
<div class="btn" style="left:239px;width:94px;">Корекция на часа</div>
<div class="btn" style="left:342px;width:91px;">Премахни</div>
<div class="btn" style="left:534px;width:91px;">Копирай към</div>
<div class="btn" style="left:636px;width:91px;">Добави други</div>
<div class="btn" style="left:735px;width:157px;letter-spacing:-0.13px;">Персонализирани полета</div>
<div class="btn" style="left:906px;width:100px;">Затвори</div>
<svg class="a" style="left:999px;top:684px" width="10" height="10" viewBox="0 0 10 10"><g fill="#b0b0b0"><rect x="7" y="1" width="2" height="2"/><rect x="4" y="4" width="2" height="2"/><rect x="7" y="4" width="2" height="2"/><rect x="1" y="7" width="2" height="2"/><rect x="4" y="7" width="2" height="2"/><rect x="7" y="7" width="2" height="2"/></g></svg>
</body></html>
